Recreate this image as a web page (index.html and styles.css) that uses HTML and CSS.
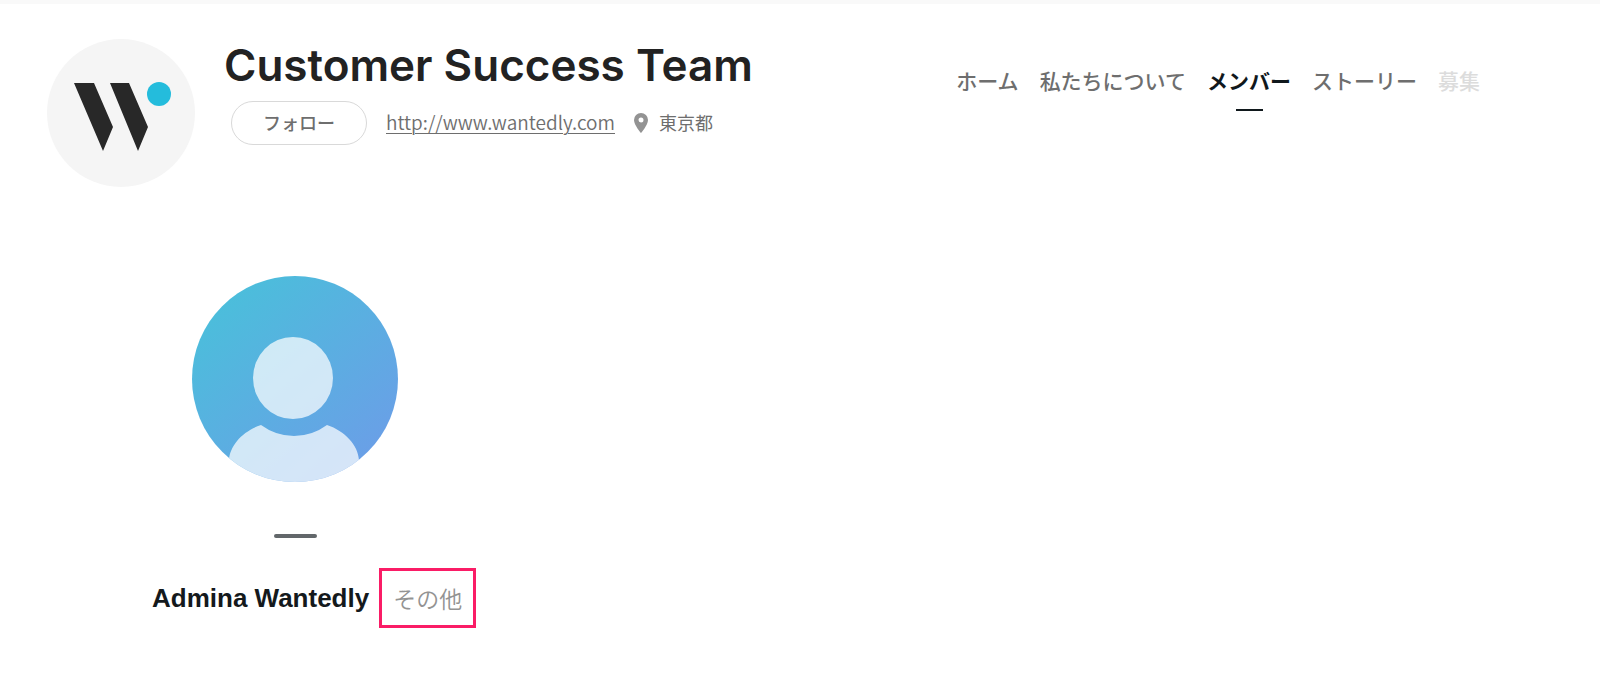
FILE: index.html
```
<!DOCTYPE html>
<html lang="ja">
<head>
  <meta charset="UTF-8">
  <meta name="viewport" content="width=device-width, initial-scale=1.0">
  <title>Customer Success Team</title>
  <link rel="stylesheet" href="styles.css">
</head>
<body>
  <header class="header">
    <svg class="logo" viewBox="0 0 148 148" aria-hidden="true">
      <circle cx="74" cy="74" r="74" fill="#f5f5f5"/>
      <path d="M27 44h20l19 44-10 24zM63 44h19l19 44-10 24z" fill="#282828"/>
      <circle cx="112" cy="55" r="12" fill="#24bcdc"/>
    </svg>
    <div class="company">
      <h1 class="company-name">Customer Success Team</h1>
      <div class="company-info">
        <button class="follow" type="button">フォロー</button>
        <a class="url" href="http://www.wantedly.com">http://www.wantedly.com</a>
        <svg class="pin" viewBox="0 0 14 20" aria-hidden="true">
          <path d="M7 0a7 7 0 0 0-7 7c0 5 7 13 7 13s7-8 7-13a7 7 0 0 0-7-7zm0 4.500a2.500 2.500 0 1 1 0 5 2.500 2.500 0 0 1 0-5z" fill="#939393"/>
        </svg>
        <span class="place">東京都</span>
      </div>
    </div>
    <nav class="nav">
      <a href="#">ホーム</a>
      <a href="#">私たちについて</a>
      <a class="active" href="#">メンバー</a>
      <a href="#">ストーリー</a>
      <a class="disabled" href="#">募集</a>
    </nav>
  </header>

  <main class="members">
    <div class="member">
      <div class="portrait">
        <svg class="avatar" viewBox="0 0 206 206" aria-hidden="true">
          <defs>
            <linearGradient id="sky" x1="0.15" y1="0.1" x2="0.85" y2="0.9">
              <stop offset="0" stop-color="#4bbedb"/>
              <stop offset="1" stop-color="#6a9fe7"/>
            </linearGradient>
            <clipPath id="round"><circle cx="103" cy="103" r="103"/></clipPath>
          </defs>
          <g clip-path="url(#round)">
            <rect width="206" height="206" fill="url(#sky)"/>
            <g fill="#fff" fill-opacity="0.72">
              <ellipse cx="101" cy="102" rx="40" ry="41"/>
              <path d="M37 184C38 169 51 155 69 149Q84 160 102 160T135 149C153 155 166 169 167 184V206H37z"/>
            </g>
          </g>
        </svg>
        <span class="bar"></span>
      </div>
      <div class="member-name">
        <h2>Admina Wantedly</h2>
        <span class="role">その他</span>
      </div>
    </div>
  </main>
</body>
</html>
```
FILE: styles.css
```
* {
  margin: 0;
  padding: 0;
  box-sizing: border-box;
}

body {
  background-color: #fff;
  border-top: 4px solid #f9f9f9;
  font-family: "Liberation Sans", "Noto Sans CJK JP", sans-serif;
  color: #6e6e6e;
}

.header {
  display: flex;
  align-items: flex-start;
  padding: 35px 120px 0 47px;
}

.logo {
  width: 148px;
  height: 148px;
  flex-shrink: 0;
}

.company {
  margin-left: 29px;
}

.company-name {
  font-family: Inter, sans-serif;
  font-size: 44px;
  font-weight: 600;
  line-height: 52px;
  color: #222;
  white-space: nowrap;
}

.company-info {
  display: flex;
  align-items: center;
  margin: 10px 0 0 7px;
  font-family: "Noto Sans CJK JP", sans-serif;
  font-size: 18px;
  line-height: 24px;
  white-space: nowrap;
}

.follow {
  width: 136px;
  height: 44px;
  margin-right: 19px;
  padding-bottom: 3px;
  border: 1px solid #d9d9d9;
  border-radius: 22px;
  background: #fff;
  font-family: "Noto Sans CJK JP", sans-serif;
  font-size: 18px;
  font-weight: 500;
  color: #6e6e6e;
  cursor: pointer;
}

.url {
  padding-bottom: 2px;
  font-size: 19px;
  font-weight: 350;
  color: #6e6e6e;
  text-decoration-thickness: 1px;
  text-underline-offset: 3px;
}

.pin {
  width: 14px;
  height: 20px;
  margin: 0 11px 0 19px;
}

.place {
  padding-bottom: 2px;
}

.nav {
  display: flex;
  gap: 21px;
  margin: 26px 0 0 auto;
  font-family: "Noto Sans CJK JP", sans-serif;
  font-size: 21px;
  font-weight: 500;
  line-height: 30px;
  white-space: nowrap;
}

.nav a {
  color: #6e6e6e;
  text-decoration: none;
}

.nav .active {
  color: #10181c;
  font-weight: 700;
}

.nav .active::after {
  content: "";
  display: block;
  width: 27px;
  height: 2px;
  margin: 14px auto 0;
  background: #10181c;
}

.nav .disabled {
  color: #dcdcdc;
}

.members {
  padding: 89px 152px 60px;
}

.portrait {
  display: flex;
  flex-direction: column;
  align-items: center;
  width: 206px;
  margin-left: 40px;
}

.avatar {
  width: 206px;
  height: 206px;
}

.bar {
  width: 43px;
  height: 4px;
  margin: 52px 0 30px;
  border-radius: 2px;
  background: #62676a;
}

.member-name {
  display: flex;
  align-items: center;
  gap: 10px;
  white-space: nowrap;
}

.member-name h2 {
  font-size: 26px;
  color: #14191c;
}

.role {
  padding: 0 11px;
  border: 3px solid #fa1c66;
  font-family: "Noto Sans CJK JP", sans-serif;
  font-size: 23px;
  font-weight: 350;
  line-height: 54px;
  color: #939393;
}
```
